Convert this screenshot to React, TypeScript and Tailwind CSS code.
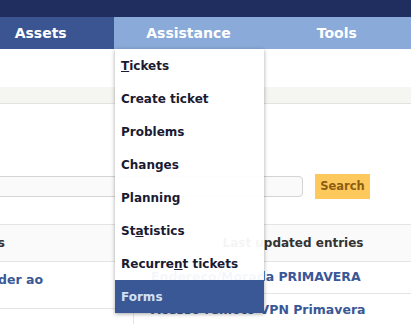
const items: { label: React.ReactNode; active?: boolean }[] = [
  { label: <><u>T</u>ickets</> },
  { label: 'Create ticket' },
  { label: 'Problems' },
  { label: 'Changes' },
  { label: 'Planning' },
  { label: <>St<u>a</u>tistics</> },
  { label: <>Recurre<u>n</u>t tickets</> },
  { label: 'Forms', active: true },
]

export default function App() {
  return (
    <div className="relative w-[411px] h-[324px] overflow-hidden bg-white font-['DejaVu_Sans',Verdana,sans-serif]">
      {/* top strip */}
      <div className="h-[17px] bg-[#1f2e5f]" />

      {/* main nav */}
      <div className="flex h-[32px] -ml-[33px] text-[14px] font-bold text-white">
        <div className="w-[148px] flex items-center justify-center bg-[#3a5591]">Assets</div>
        <div className="w-[149px] flex items-center justify-center bg-[#8aabd9]">Assistance</div>
        <div className="w-[149px] flex items-center justify-center bg-[#8aabd9]">Tools</div>
        <div className="flex-1 bg-[#8aabd9]" />
      </div>

      <div className="h-[38px]" />
      <div className="h-[17px] bg-[#f5f5f2] border-b border-[#e2e2e0]" />

      {/* search */}
      <div className="flex items-center gap-[12px] mt-[70px] h-[25px]">
        <div className="-ml-[20px] w-[323px] h-[21px] rounded-[4px] border border-[#d4d4d4] bg-[#fafafa]" />
        <button className="w-[55px] h-[25px] bg-[#fec95c] text-[#8b5e14] text-[11.5px] font-bold">Search</button>
      </div>

      {/* tables */}
      <div className="flex mt-[25px] text-[12px] font-bold">
        <div className="w-[128px] shrink-0">
          <div className="h-[38px] flex items-center justify-end pr-[123px] bg-[#fafafa] border-y border-[#e4e4e4] text-[#333]">
            <span className="whitespace-nowrap">Public reminders</span>
          </div>
          <div className="h-[47px] flex justify-end pr-[85px] pt-[9px] border-b border-[#e4e4e4] text-[#3a5796] text-[12.5px]">
            <span className="whitespace-nowrap">Pedidos a responder ao</span>
          </div>
        </div>
        <div className="w-[319px] shrink-0 ml-[5px] border-l border-[#e4e4e4]">
          <div className="h-[38px] flex items-center justify-center bg-[#fafafa] border-y border-[#e4e4e4] text-[#333]">
            Last updated entries
          </div>
          <div className="h-[32px] flex items-center pl-[17px] border-b border-[#e4e4e4] text-[#3a5796] text-[12.5px] whitespace-nowrap">
            Endereço/Morada PRIMAVERA
          </div>
          <div className="h-[32px] flex items-center pl-[17px] pt-[2px] border-b border-[#e4e4e4] text-[#3a5796] text-[12.5px] whitespace-nowrap">
            Acesso remoto VPN Primavera
          </div>
        </div>
      </div>

      {/* dropdown menu */}
      <div className="absolute left-[115px] top-[49px] w-[149px] bg-white/95 shadow-[0_1px_4px_rgba(0,0,0,0.35)]">
        {items.map((it, i) => (
          <div
            key={i}
            className={
              it.active
                ? 'h-[33px] flex items-center pl-[6px] text-[12px] font-bold bg-[#3a5796] text-[#d2e0f2]'
                : 'h-[33px] flex items-center pl-[6px] text-[12px] font-bold text-[#1a1a33]'
            }
          >
            <span className="whitespace-nowrap">{it.label}</span>
          </div>
        ))}
      </div>
    </div>
  )
}
